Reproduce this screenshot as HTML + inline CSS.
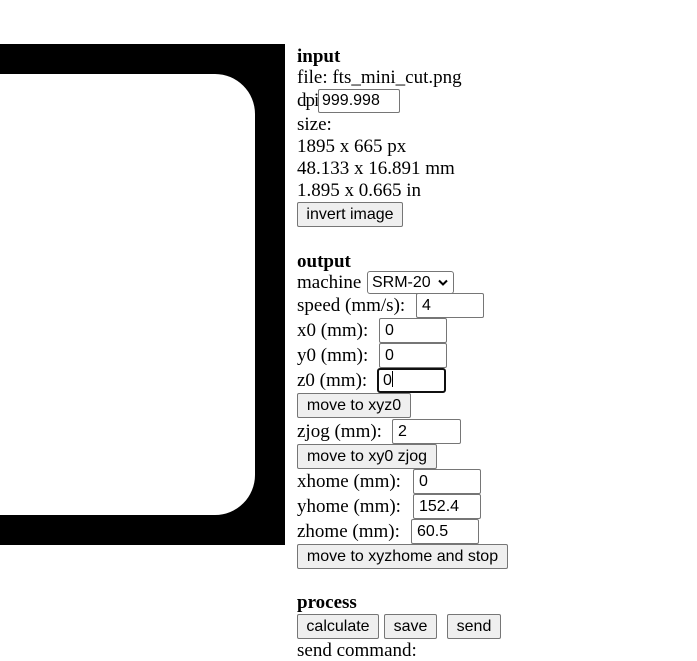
<!DOCTYPE html>
<html><head><style>
body{margin:0;width:697px;height:652px;overflow:hidden;background:#fff;position:relative;font-family:"Liberation Serif",serif;font-size:19px;color:#000}
.t{position:absolute;left:297px;line-height:20px;white-space:nowrap}
.b{font-weight:bold}
.i,.bt,.s{position:absolute;box-sizing:border-box;font-family:"Liberation Sans",sans-serif;font-size:16px;line-height:23px;white-space:nowrap}
.i{border:1px solid #767676;border-radius:2px;padding:0 5px;background:#fff}
.bt{border:1px solid #767676;border-radius:2px;background:#efefef;text-align:center}
.s{border:1px solid #767676;border-radius:3px;padding:0 4px;background:#fff;line-height:21px}
</style></head><body>
<div style="position:absolute;left:0;top:44px;width:285px;height:501px;background:#000"></div>
<div style="position:absolute;left:0;top:74px;width:255px;height:441px;background:#fff;border-radius:0 40px 40px 0"></div>

<div class="t b" style="top:47px">input</div>
<div class="t" style="top:68px">file: fts_mini_cut.png</div>
<div class="t" style="top:91px;letter-spacing:-1px">dpi:</div>
<div class="i" style="left:318px;top:89px;width:82px;height:24px;padding:0 3px;line-height:22px">999.998</div>
<div class="t" style="top:115px">size:</div>
<div class="t" style="top:137px">1895 x 665 px</div>
<div class="t" style="top:159px">48.133 x 16.891 mm</div>
<div class="t" style="top:181px">1.895 x 0.665 in</div>
<div class="bt" style="left:297px;top:202px;width:106px;height:25px">invert image</div>

<div class="t b" style="top:252px">output</div>
<div class="t" style="top:273px">machine</div>
<div class="s" style="left:367px;top:271px;width:87px;height:23px">SRM-20 <svg width="10" height="8" viewBox="0 0 10 8" style="position:absolute;right:5px;top:7px"><path d="M1 1.5L5 5.5L9 1.5" fill="none" stroke="#000" stroke-width="2"/></svg></div>
<div class="t" style="top:296px">speed (mm/s):</div>
<div class="i" style="left:416px;top:293px;width:68px;height:25px">4</div>
<div class="t" style="top:321px">x0 (mm):</div>
<div class="i" style="left:379px;top:318px;width:68px;height:25px">0</div>
<div class="t" style="top:346px">y0 (mm):</div>
<div class="i" style="left:379px;top:343px;width:68px;height:25px">0</div>
<div class="t" style="top:371px">z0 (mm):</div>
<div class="i" style="left:377px;top:368px;width:69px;height:25px;border:2px solid #101010;border-radius:3px;padding:0 4px;line-height:21px">0<span style="display:inline-block;width:1px;height:16px;background:#000;vertical-align:-2px"></span></div>
<div class="bt" style="left:297px;top:393px;width:114px;height:25px">move to xyz0</div>
<div class="t" style="top:422px">zjog (mm):</div>
<div class="i" style="left:392px;top:419px;width:69px;height:25px">2</div>
<div class="bt" style="left:297px;top:444px;width:140px;height:25px">move to xy0 zjog</div>
<div class="t" style="top:472px">xhome (mm):</div>
<div class="i" style="left:413px;top:469px;width:68px;height:25px">0</div>
<div class="t" style="top:497px">yhome (mm):</div>
<div class="i" style="left:413px;top:494px;width:68px;height:25px">152.4</div>
<div class="t" style="top:522px">zhome (mm):</div>
<div class="i" style="left:411px;top:519px;width:68px;height:25px">60.5</div>
<div class="bt" style="left:297px;top:544px;width:211px;height:25px">move to xyzhome and stop</div>

<div class="t b" style="top:593px">process</div>
<div class="bt" style="left:297px;top:614px;width:82px;height:25px">calculate</div>
<div class="bt" style="left:384px;top:614px;width:53px;height:25px">save</div>
<div class="bt" style="left:447px;top:614px;width:54px;height:25px">send</div>
<div class="t" style="top:641px">send command:</div>
</body></html>
